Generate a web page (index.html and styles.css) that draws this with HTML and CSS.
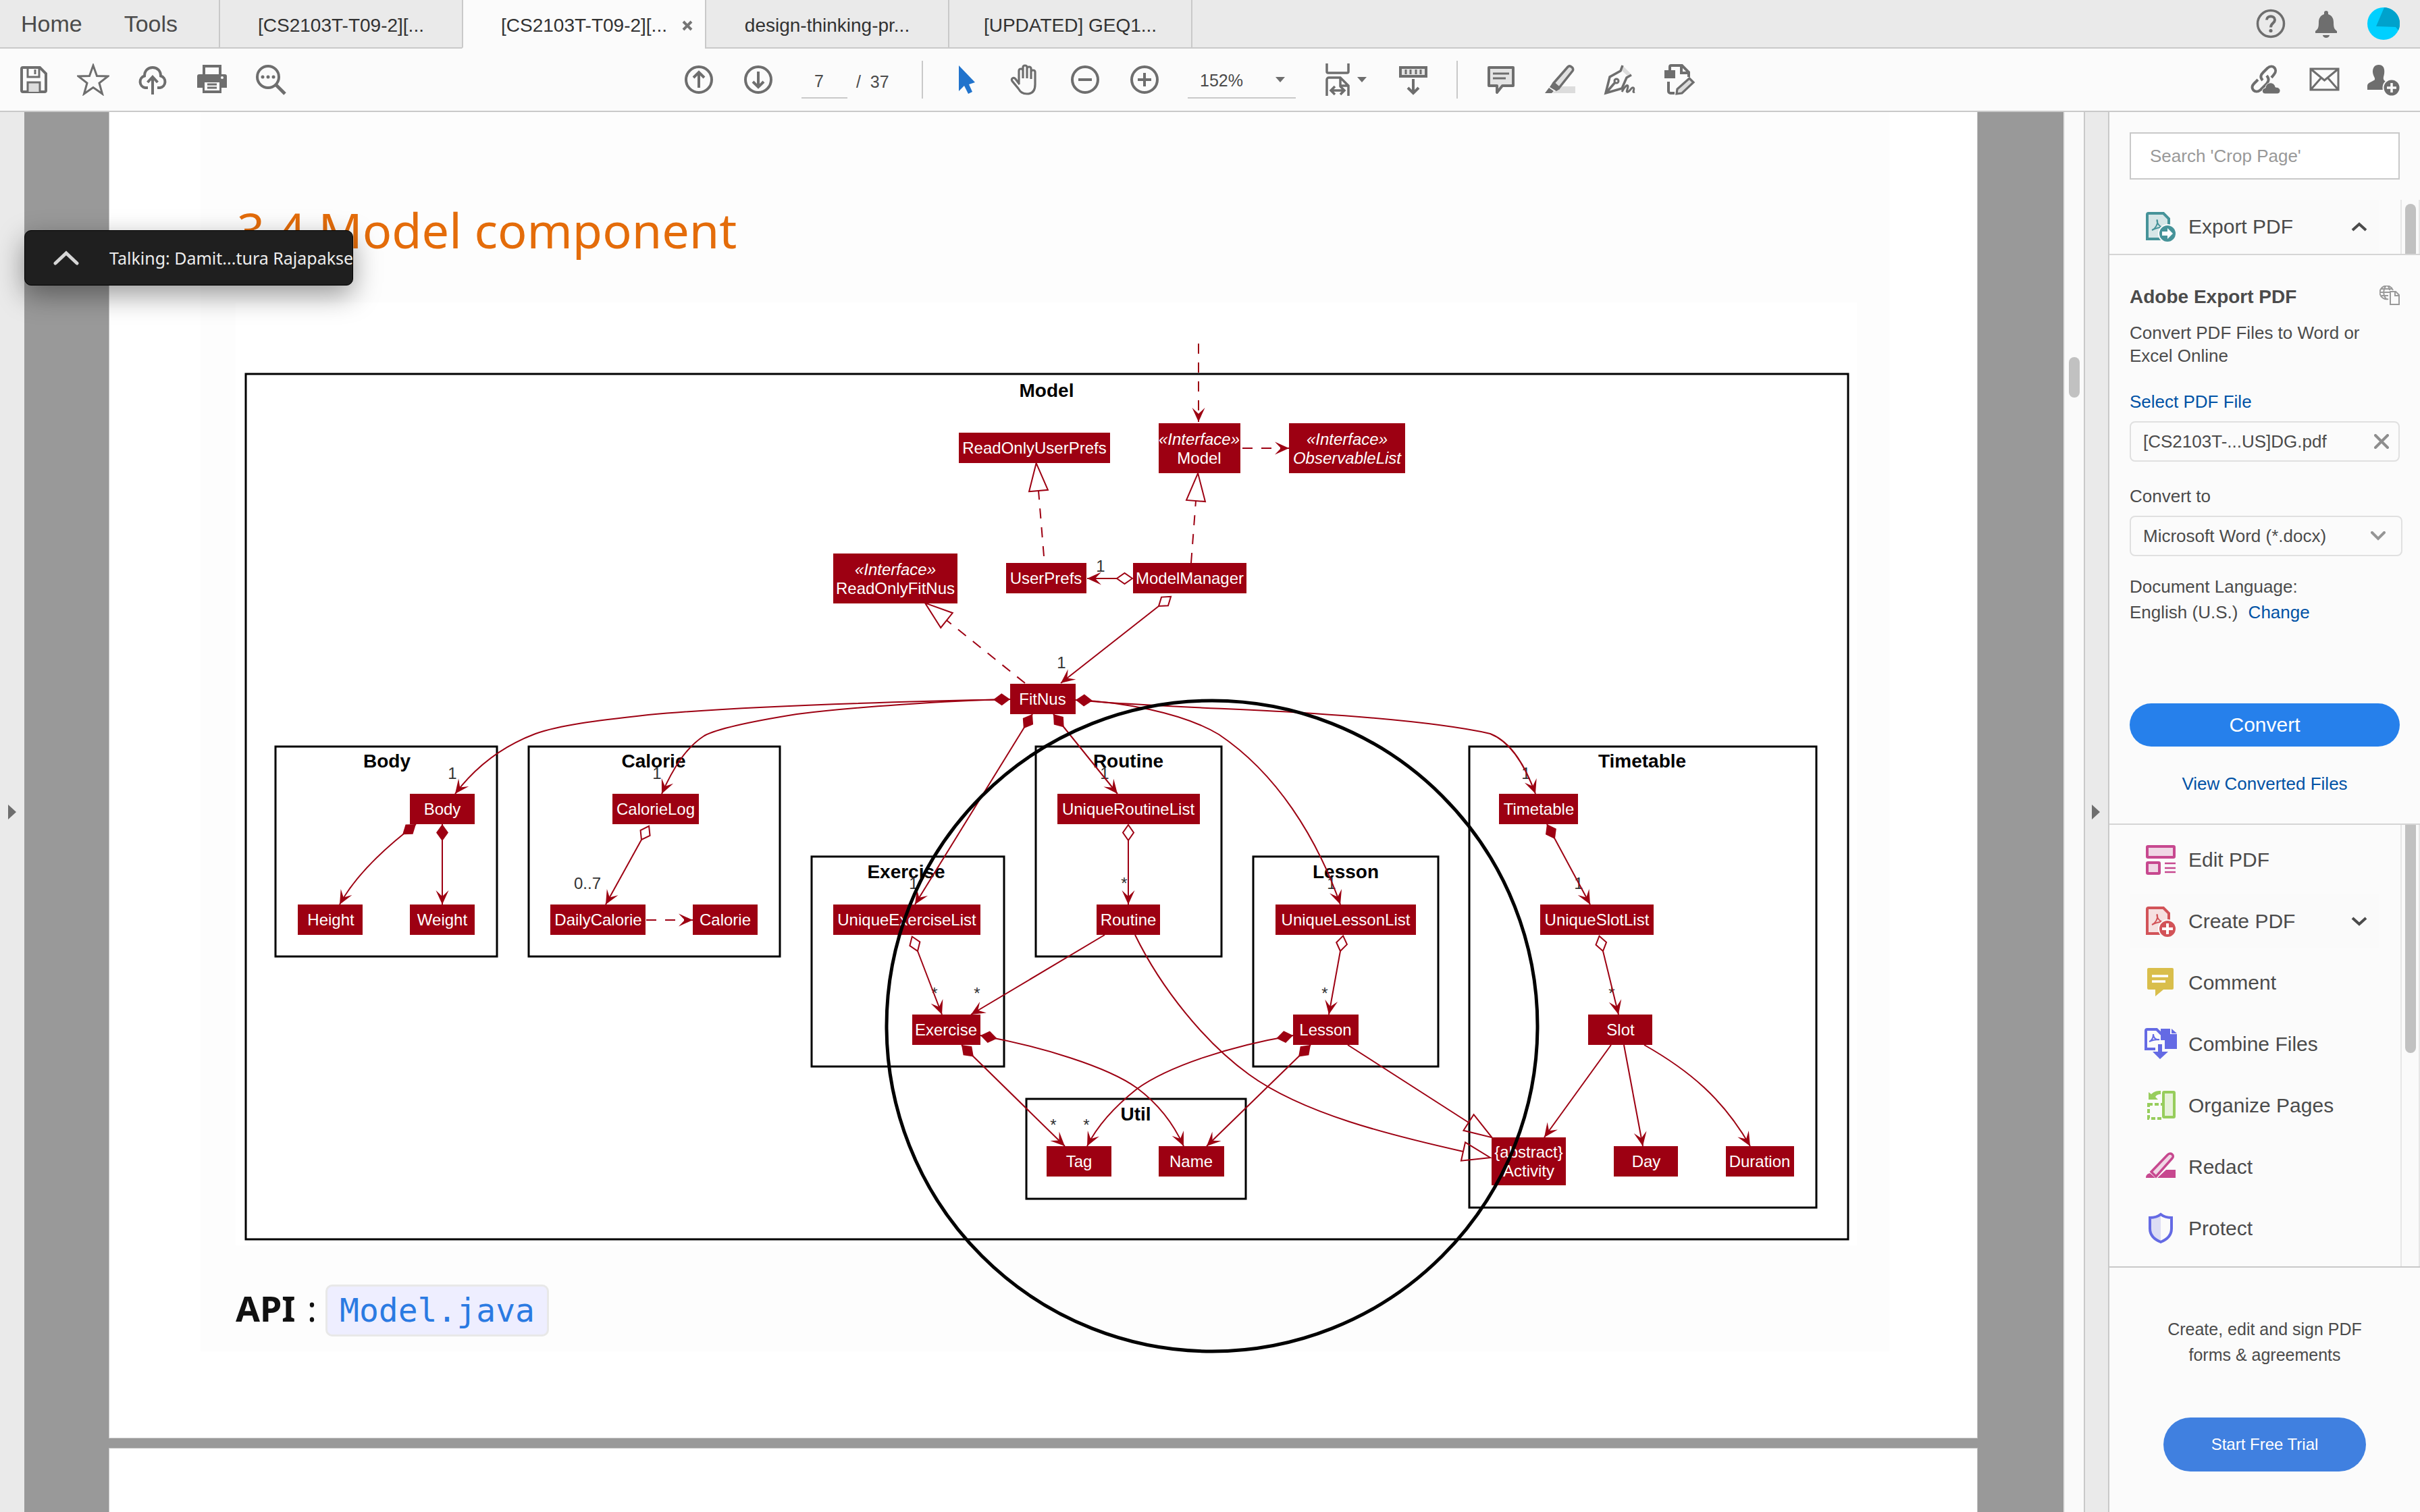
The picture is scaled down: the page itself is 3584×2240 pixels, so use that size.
FILE: index.html
```html
<!DOCTYPE html>
<html lang="en">
<head>
<meta charset="utf-8">
<title>[CS2103T-T09-2] DG.pdf</title>
<link rel="stylesheet" href="styles.css">
</head>
<body>
<header class="tabbar">
  <nav class="home-nav"><a href="#home">Home</a><a href="#tools">Tools</a></nav>
  <a class="tab" href="#doc1"><span>[CS2103T-T09-2][...</span></a>
  <div class="tab tab-active"><span>[CS2103T-T09-2][...</span>
    <button class="tab-close" aria-label="Close tab"><svg viewBox="0 0 16 16" width="16" height="16"><path d="M2 2l12 12M14 2L2 14" stroke="#757575" stroke-width="4" fill="none"/></svg></button>
  </div>
  <a class="tab" href="#doc3"><span>design-thinking-pr...</span></a>
  <a class="tab" href="#doc4"><span>[UPDATED] GEQ1...</span></a>
  <div class="account">
    <button class="account-btn" aria-label="Help"><svg class="icon" viewBox="0 0 48 48"><circle cx="24" cy="24" r="19.500" fill="none" stroke="#6e6e6e" stroke-width="3.500"/><path d="M18 18.500c0-7 12-7 12 0 0 5-6 4.500-6 11" fill="none" stroke="#6e6e6e" stroke-width="4"/><circle cx="24" cy="34.500" r="2.600" fill="#6e6e6e"/></svg></button>
    <button class="account-btn" aria-label="Notifications"><svg class="icon" viewBox="0 0 48 48"><path d="M24 5a3 3 0 0 1 3 3v2c6 2 8 7 8 12 0 8 1 10 5 13v3H8v-3c4-3 5-5 5-13 0-5 2-10 8-12V8a3 3 0 0 1 3-3zM19 41h10a5 4 0 0 1-10 0z" fill="#6e6e6e"/></svg></button>
    <button class="account-btn" aria-label="Account"><svg class="icon" viewBox="0 0 48 48"><circle cx="24" cy="24" r="24" fill="#00d0ff"/><path d="M25 0a24 24 0 0 1 21 34l-4-5-29-1z" fill="#00a2cc"/></svg></button>
  </div>
</header>

<div class="toolbar">
  <div class="group">
    <button class="tool" aria-label="Save"><svg class="icon line" viewBox="0 0 48 48"><path d="M8 6h25l9 9v25a2 2 0 0 1-2 2H8a2 2 0 0 1-2-2V8a2 2 0 0 1 2-2z"/><path d="M15 6v14h17V6M26 9v7" stroke-width="3"/><path d="M15 42V28h18v14" fill="#dcdcdc" stroke-width="3"/></svg></button>
    <button class="tool" aria-label="Star"><svg class="icon line" viewBox="0 0 48 48"><path d="M24 3l5.500 15.500L46 19 33 29l4.500 16L24 35.500 10.500 45 15 29 2 19l16.500-.5z" stroke-width="3"/></svg></button>
    <button class="tool" aria-label="Upload to cloud"><svg class="icon line" viewBox="0 0 48 48"><path d="M17 36h-4a9 9 0 0 1-1-17.500C12 11 17 6 24 6s12 5 12 12.500A9 9 0 0 1 35 36h-4"/><path d="M24 46V21M16.500 28l7.500-8 7.500 8"/></svg></button>
    <button class="tool" aria-label="Print"><svg class="icon" viewBox="0 0 48 48"><path d="M12 20V4h24v16" fill="none" stroke="#6e6e6e" stroke-width="4"/><path d="M5 16h38a3 3 0 0 1 3 3v17h-8v8H10v-8H2V19a3 3 0 0 1 3-3z" fill="#6e6e6e"/><path d="M13 28h22v12H13z" fill="#fbfbfb"/><path d="M17 31h14M17 36h14" stroke="#6e6e6e" stroke-width="3"/><circle cx="39" cy="21" r="2" fill="#fbfbfb"/></svg></button>
    <button class="tool" aria-label="Search"><svg class="icon line" viewBox="0 0 48 48"><circle cx="19" cy="20" r="16"/><path d="M31 32l13 13" stroke-width="5"/><circle class="dot" cx="11" cy="20" r="2.500"/><circle class="dot" cx="19" cy="20" r="2.500"/><circle class="dot" cx="27" cy="20" r="2.500"/></svg></button>
  </div>
  <div class="group group-center">
    <button class="tool" aria-label="Previous page"><svg class="icon line" viewBox="0 0 48 48"><circle cx="24" cy="24" r="19"/><path d="M24 36V13M16 21l8-8 8 8"/></svg></button>
    <button class="tool" aria-label="Next page"><svg class="icon line" viewBox="0 0 48 48"><circle cx="24" cy="24" r="19"/><path d="M24 12v23M16 27l8 8 8-8"/></svg></button>
    <input class="page-input" type="text" value="7" aria-label="Page number">
    <span class="page-total">/&nbsp; 37</span>
    <span class="divider"></span>
    <button class="tool" aria-label="Select"><svg class="icon" viewBox="0 0 48 48"><path d="M13 3v38l8-8 6 12 6-3-5-11 9-3z" fill="#2173cc"/></svg></button>
    <button class="tool" aria-label="Hand"><svg class="icon line" viewBox="0 0 48 48"><path d="M14 30V11c0-4 6-4 6 0v11V6c0-4 6-4 6 0v16V8c0-4 6-4 6 0v15V13c0-4 6-4 6 0v18c0 9-4 14-12 14-7 0-10-3-13-8L4 26c-2-4 2-6 5-3l6 8" stroke-width="3.200"/></svg></button>
    <button class="tool" aria-label="Zoom out"><svg class="icon line" viewBox="0 0 48 48"><circle cx="24" cy="24" r="19"/><path d="M14 24h20" stroke-width="4"/></svg></button>
    <button class="tool" aria-label="Zoom in"><svg class="icon line" viewBox="0 0 48 48"><circle cx="24" cy="24" r="19"/><path d="M14 24h20M24 14v20" stroke-width="4"/></svg></button>
    <span class="zoom"><select class="zoom-select" aria-label="Zoom level"><option>152%</option></select><svg class="zoom-caret" viewBox="0 0 14 8" width="14" height="8"><path d="M0 0h14L7 8z" fill="#6e6e6e"/></svg></span>
    <button class="tool tool-fit" aria-label="Fit width"><svg class="icon line" viewBox="0 0 48 48"><path d="M8 0v12a2 2 0 0 0 2 2h28a2 2 0 0 0 2-2V0M8 48V24a3 3 0 0 1 3-3h17l12 12v15M28 21v12h12M14 40h20M20 34l-6 6 6 6M28 34l6 6-6 6" stroke-width="3.500"/></svg><svg viewBox="0 0 14 8" width="14" height="8"><path d="M0 0h14L7 8z" fill="#6e6e6e"/></svg></button>
    <button class="tool" aria-label="Scrolling mode"><svg class="icon line" viewBox="0 0 48 48"><path d="M5 6h38v13H5z" fill="#e4e4e4"/><path d="M13 9v7M20 9v7M28 9v7M35 9v7" stroke-width="3"/><path d="M24 23v21M16 36l8 8 8-8"/></svg></button>
    <span class="divider divider-end"></span>
    <button class="tool" aria-label="Comment"><svg class="icon line" viewBox="0 0 48 48"><path d="M6 6h36v27H26l-8 10V33H6z" fill="#e4e4e4" stroke-linejoin="round"/><path d="M12 15h24M12 22h19" stroke-width="3"/></svg></button>
    <button class="tool" aria-label="Highlight"><svg class="icon" viewBox="0 0 48 48"><path d="M46 34v10H12l12-10z" fill="#dcdcdc"/><path d="M14 29L35 5c3-3 10 2 7 6L22 36z" fill="#e0e0e0" stroke="#6e6e6e" stroke-width="3.500"/><path d="M12 29l11 9-5 3-10-6zM7 36l7 5-3 3H1z" fill="#6e6e6e"/></svg></button>
    <button class="tool" aria-label="Sign"><svg class="icon line" viewBox="0 0 48 48"><path d="M27 2l13 13-5 3-11-10z" fill="#dcdcdc" stroke="none"/><path d="M28 3l-3 8L9 20 3 44l24-7 7-16 7-4M4 43l13-15" stroke-width="3.500"/><circle cx="19" cy="26" r="3" stroke-width="3"/><path d="M27 42c4-8 9-12 9-8s-4 9 0 8 5-8 8-6-3 8 2 6" stroke-width="3"/></svg></button>
    <button class="tool" aria-label="Edit document"><svg class="icon line" viewBox="0 0 48 48"><path d="M10 10V5a2 2 0 0 1 2-2h16l10 10v7M27 3v11h11M8 27v14a3 3 0 0 0 3 3h6" stroke-width="4"/><path d="M2 10h16v12H2z" fill="#6e6e6e" stroke="none"/><path d="M21 38l18-16 6 6-17 16-8 1z" fill="#dcdcdc" stroke-width="3.200"/></svg></button>
  </div>
  <div class="group group-end">
    <button class="tool" aria-label="Share link"><svg class="icon line" viewBox="0 0 48 48"><path d="M21 25c-5-5-2-9 1-12l6-6c8-7 16 2 10 9l-4 5M27 18c4 5 3 8 0 12l-9 9c-8 7-17-2-10-9l6-6" stroke-width="4"/><path d="M24 45c-5-1-5-8 1-9 1-9 13-10 15-1 9 0 9 10 2 10z" fill="#6e6e6e" stroke="#fbfbfb" stroke-width="1"/></svg></button>
    <button class="tool" aria-label="Mail"><svg class="icon line" viewBox="0 0 48 48"><path d="M4 8h41v31H4zM4 8l20.500 17L45 8M4 39l15-17M45 39L30 22" stroke-width="3"/></svg></button>
    <button class="tool" aria-label="Invite"><svg class="icon" viewBox="0 0 48 48"><path d="M17 2c10 0 9 12 7 18-1 5 2 6 6 8v11H0v-6c0-5 10-7 11-9 1-3-3-6-3-12 0-6 3-10 9-10z" fill="#6e6e6e"/><circle cx="36" cy="36" r="12.500" fill="#6e6e6e" stroke="#fbfbfb" stroke-width="2"/><path d="M29 36h14M36 29v14" stroke="#fbfbfb" stroke-width="3.500"/></svg></button>
  </div>
</div>

<main class="workspace">
  <button class="rail rail-left" aria-label="Show navigation pane"><svg viewBox="0 0 12 22" width="12" height="22"><path d="M0 0l12 11L0 22z" fill="#6e6e6e"/></svg></button>

  <div class="document">
    <article class="sheet">
      <div class="sheet-body">
        <h1>3.4 Model component</h1>
        <svg class="diagram" viewBox="349 448 2401 1397" role="img" aria-label="Model component class diagram">
          <defs>
            <marker id="arrow" viewBox="-24 -12 26 24" markerUnits="userSpaceOnUse" markerWidth="26" markerHeight="24" refX="0" refY="0" orient="auto"><path d="M0 0L-21 -9.500L-12 0L-21 9.500z" fill="#9d0012"/></marker>
            <marker id="filled" viewBox="-2 -12 30 24" markerUnits="userSpaceOnUse" markerWidth="30" markerHeight="24" refX="0" refY="0" orient="auto"><path d="M0 0L12.500 -9L25 0L12.500 9z" fill="#9d0012"/></marker>
            <marker id="open" viewBox="-2 -12 30 24" markerUnits="userSpaceOnUse" markerWidth="30" markerHeight="24" refX="24" refY="0" orient="auto"><path d="M1 0L12.500 -8L24 0L12.500 8z" fill="none" stroke="#9d0012" stroke-width="2"/></marker>
            <marker id="tri" viewBox="-2 -16 48 32" markerUnits="userSpaceOnUse" markerWidth="48" markerHeight="32" refX="0" refY="0" orient="auto"><path d="M0 -14L41 0L0 14z" fill="none" stroke="#9d0012" stroke-width="2"/></marker>
          </defs>
          <g class="packages">
            <rect x="364" y="554" width="2373" height="1282"/>
            <rect x="408" y="1106" width="328" height="311"/>
            <rect x="783" y="1106" width="372" height="311"/>
            <rect x="1202" y="1269" width="285" height="311"/>
            <rect x="1534" y="1106" width="275" height="311"/>
            <rect x="1856" y="1269" width="274" height="311"/>
            <rect x="1520" y="1628" width="325" height="148"/>
            <rect x="2176" y="1106" width="514" height="683"/>
          </g>
          <g class="titles">
            <text x="1550" y="588">Model</text>
            <text x="573" y="1137">Body</text>
            <text x="968" y="1137">Calorie</text>
            <text x="1342" y="1301">Exercise</text>
            <text x="1671" y="1137">Routine</text>
            <text x="1993" y="1301">Lesson</text>
            <text x="1682" y="1660">Util</text>
            <text x="2432" y="1137">Timetable</text>
          </g>
          <g class="counts">
            <text x="1630" y="847">1</text><text x="1572" y="990">1</text>
            <text x="670" y="1154">1</text><text x="973" y="1154">1</text><text x="870" y="1317">0..7</text>
            <text x="1636" y="1154">1</text><text x="1353" y="1317">1</text><text x="1972" y="1317">1</text>
            <text x="2260" y="1154">1</text><text x="2338" y="1317">1</text>
            <text x="1665" y="1317">*</text><text x="1384" y="1480">*</text><text x="1447" y="1480">*</text>
            <text x="1962" y="1480">*</text><text x="1560" y="1675">*</text><text x="1609" y="1675">*</text><text x="2387" y="1480">*</text>
          </g>
          <g class="nodes">
            <rect x="1420" y="641" width="224" height="45"/><text x="1532" y="672">ReadOnlyUserPrefs</text>
            <rect x="1716" y="627" width="121" height="74"/><text class="it" x="1776" y="659">«Interface»</text><text x="1776" y="687">Model</text>
            <rect x="1909" y="627" width="172" height="74"/><text class="it" x="1995" y="659">«Interface»</text><text class="it" x="1995" y="687">ObservableList</text>
            <rect x="1234" y="820" width="184" height="74"/><text class="it" x="1326" y="852">«Interface»</text><text x="1326" y="880">ReadOnlyFitNus</text>
            <rect x="1490" y="834" width="119" height="45"/><text x="1549" y="865">UserPrefs</text>
            <rect x="1678" y="834" width="168" height="45"/><text x="1762" y="865">ModelManager</text>
            <rect x="1496" y="1013" width="97" height="45"/><text x="1544" y="1044">FitNus</text>
            <rect x="607" y="1176" width="96" height="45"/><text x="655" y="1207">Body</text>
            <rect x="907" y="1176" width="128" height="45"/><text x="971" y="1207">CalorieLog</text>
            <rect x="441" y="1340" width="96" height="45"/><text x="490" y="1371">Height</text>
            <rect x="607" y="1340" width="96" height="45"/><text x="655" y="1371">Weight</text>
            <rect x="815" y="1340" width="141" height="45"/><text x="886" y="1371">DailyCalorie</text>
            <rect x="1026" y="1340" width="96" height="45"/><text x="1074" y="1371">Calorie</text>
            <rect x="1566" y="1176" width="211" height="45"/><text x="1671" y="1207">UniqueRoutineList</text>
            <rect x="1234" y="1340" width="218" height="45"/><text x="1343" y="1371">UniqueExerciseList</text>
            <rect x="1624" y="1340" width="94" height="45"/><text x="1671" y="1371">Routine</text>
            <rect x="1889" y="1340" width="208" height="45"/><text x="1993" y="1371">UniqueLessonList</text>
            <rect x="1351" y="1503" width="101" height="45"/><text x="1401" y="1534">Exercise</text>
            <rect x="1915" y="1503" width="97" height="45"/><text x="1963" y="1534">Lesson</text>
            <rect x="1550" y="1698" width="96" height="45"/><text x="1598" y="1729">Tag</text>
            <rect x="1716" y="1698" width="97" height="45"/><text x="1764" y="1729">Name</text>
            <rect x="2220" y="1176" width="117" height="45"/><text x="2279" y="1207">Timetable</text>
            <rect x="2281" y="1340" width="168" height="45"/><text x="2365" y="1371">UniqueSlotList</text>
            <rect x="2352" y="1503" width="95" height="45"/><text x="2400" y="1534">Slot</text>
            <rect x="2209" y="1685" width="110" height="71"/><text x="2264" y="1715">{abstract}</text><text x="2264" y="1743">Activity</text>
            <rect x="2390" y="1698" width="95" height="45"/><text x="2438" y="1729">Day</text>
            <rect x="2556" y="1698" width="101" height="45"/><text x="2606" y="1729">Duration</text>
          </g>
          <g class="edges">
            <path class="dash" d="M1775 509V625" marker-end="url(#arrow)"/>
            <path class="dash" d="M1840 664H1909" marker-end="url(#arrow)"/>
            <path class="dash" d="M957 1363H1026" marker-end="url(#arrow)"/>
            <path class="dash" d="M1546 824L1538 727" marker-end="url(#tri)"/>
            <path class="dash" d="M1764 834L1771 742" marker-end="url(#tri)"/>
            <path class="dash" d="M1518 1012L1402 919" marker-end="url(#tri)"/>
            <path d="M1654 857H1610" marker-start="url(#open)" marker-end="url(#arrow)"/>
            <path d="M1716 898L1571 1012" marker-start="url(#open)" marker-end="url(#arrow)"/>
            <path d="M1496 1036C1300 1040 1100 1046 960 1059C880 1068 830 1074 793 1087C745 1105 705 1135 674 1176" marker-start="url(#filled)" marker-end="url(#arrow)"/>
            <path d="M1496 1036C1400 1038 1260 1048 1180 1058C1130 1066 1065 1078 1043 1090C1015 1108 996 1140 980 1176" marker-end="url(#arrow)"/>
            <path d="M616 1221C570 1256 527 1296 503 1340" marker-start="url(#filled)" marker-end="url(#arrow)"/>
            <path d="M655 1221V1340" marker-start="url(#filled)" marker-end="url(#arrow)"/>
            <path d="M950 1244L897 1340" marker-start="url(#open)" marker-end="url(#arrow)"/>
            <path d="M1529 1058L1355 1340" marker-start="url(#filled)" marker-end="url(#arrow)"/>
            <path d="M1560 1058L1655 1176" marker-start="url(#filled)" marker-end="url(#arrow)"/>
            <path d="M1593 1037C1660 1040 1750 1055 1805 1088C1890 1145 1950 1240 1985 1340" marker-start="url(#filled)" marker-end="url(#arrow)"/>
            <path d="M1593 1037C1700 1047 1840 1050 1945 1057C2050 1064 2150 1074 2207 1087C2240 1100 2260 1138 2274 1176" marker-end="url(#arrow)"/>
            <path d="M1671 1245V1340" marker-start="url(#open)" marker-end="url(#arrow)"/>
            <path d="M1359 1409L1395 1503" marker-start="url(#open)" marker-end="url(#arrow)"/>
            <path d="M1636 1385L1438 1503" marker-end="url(#arrow)"/>
            <path d="M1681 1385C1720 1465 1785 1545 1850 1592C1930 1650 2060 1682 2167 1706" marker-end="url(#tri)"/>
            <path d="M1985 1409L1968 1503" marker-start="url(#open)" marker-end="url(#arrow)"/>
            <path d="M1424 1548L1577 1698" marker-start="url(#filled)" marker-end="url(#arrow)"/>
            <path d="M1452 1534C1540 1550 1640 1580 1684 1612C1715 1635 1738 1665 1753 1698" marker-start="url(#filled)" marker-end="url(#arrow)"/>
            <path d="M1915 1534C1820 1550 1730 1580 1684 1613C1650 1640 1625 1668 1610 1698" marker-start="url(#filled)" marker-end="url(#arrow)"/>
            <path d="M1941 1548L1787 1698" marker-start="url(#filled)" marker-end="url(#arrow)"/>
            <path d="M1996 1548L2175 1663" marker-end="url(#tri)"/>
            <path d="M2291 1221L2355 1340" marker-start="url(#filled)" marker-end="url(#arrow)"/>
            <path d="M2374 1409L2397 1503" marker-start="url(#open)" marker-end="url(#arrow)"/>
            <path d="M2386 1548L2287 1685" marker-end="url(#arrow)"/>
            <path d="M2405 1548L2433 1698" marker-end="url(#arrow)"/>
            <path d="M2435 1548C2502 1586 2552 1628 2592 1698" marker-end="url(#arrow)"/>
          </g>
          <circle cx="1795" cy="1520" r="482" fill="none" stroke="#000" stroke-width="5"/>
        </svg>
        <p class="api"><strong>API</strong><span>:</span><code>Model.java</code></p>
      </div>
    </article>
    <article class="sheet sheet-next"></article>
  </div>

  <div class="doc-scroll"><span class="thumb doc-thumb"></span></div>
  <button class="rail rail-right" aria-label="Hide tools pane"><svg viewBox="0 0 12 22" width="12" height="22"><path d="M0 0l12 11L0 22z" fill="#6e6e6e"/></svg></button>

  <aside class="panel">
    <div class="search"><input type="search" placeholder="Search 'Crop Page'" aria-label="Search tools"></div>
    <div class="scroll-row export-head">
      <button class="tool-row tool-row-open">
        <svg class="icon" viewBox="0 0 48 48"><path d="M6 4h22l8 8v30H4V6a2 2 0 0 1 2-2z" fill="#d6e6e7" stroke="#469399" stroke-width="4"/><path d="M11 29c5-2 9-9 8-14s-2 9 10 10c-8-1-14 2-18 4z" fill="none" stroke="#469399" stroke-width="2"/><circle cx="34" cy="34" r="13" fill="#469399" stroke="#fafafa" stroke-width="2"/><path d="M26 31h8v-5l8 8-8 8v-5h-8z" fill="#fff"/></svg>
        <span>Export PDF</span>
        <svg class="chevron" viewBox="0 0 24 14" width="24" height="14"><path d="M2 12l10-9 10 9" fill="none" stroke="#4b4b4b" stroke-width="4"/></svg>
      </button>
      <div class="panel-scroll"><span class="thumb export-thumb"></span></div>
    </div>
    <section class="export-form">
      <div class="form-title"><h2>Adobe Export PDF</h2><svg viewBox="0 0 30 30" width="30" height="30" fill="none" stroke="#9a9a9a" stroke-width="2"><path d="M13 20a10 10 0 1 1 7-13M1 10h14M3 5h15M3 15h10M10 0c-5 6-5 14 0 20M11 0c3 2 4 4 4 7"/><path d="M16 9h8l5 5v14H16zM23 9v6h6"/></svg></div>
      <p class="intro">Convert PDF Files to Word or Excel Online</p>
      <a class="link select-link" href="#select">Select PDF File</a>
      <div class="file"><span>[CS2103T-...US]DG.pdf</span><button aria-label="Remove file"><svg viewBox="0 0 22 22" width="22" height="22"><path d="M2 2l18 18M20 2L2 20" stroke="#8e8e8e" stroke-width="4" fill="none" stroke-linecap="round"/></svg></button></div>
      <label class="convert-label" for="format">Convert to</label>
      <div class="format"><select id="format"><option>Microsoft Word (*.docx)</option></select><svg viewBox="0 0 22 14" width="22" height="14"><path d="M2 2l9 9 9-9" fill="none" stroke="#959595" stroke-width="4" stroke-linecap="round"/></svg></div>
      <p class="language">Document Language:<br>English (U.S.) <a class="link" href="#language">Change</a></p>
      <button class="convert">Convert</button>
      <a class="link view-link" href="#converted">View Converted Files</a>
    </section>
    <div class="scroll-row tools">
      <div class="tool-list">
        <button class="tool-row"><svg class="icon" viewBox="0 0 48 48"><g fill="#f0d7e5" stroke="#c7488f" stroke-width="4"><rect x="4" y="4" width="40" height="16" rx="1"/><rect x="4" y="28" width="18" height="16" rx="1"/></g><path d="M30 29h16M30 36h16M30 42h16" stroke="#c7488f" stroke-width="2.500"/></svg><span>Edit PDF</span></button>
        <button class="tool-row tool-row-open"><svg class="icon" viewBox="0 0 48 48"><path d="M6 4h22l8 8v30H4V6a2 2 0 0 1 2-2z" fill="#f6e0e0" stroke="#d25358" stroke-width="4"/><path d="M11 29c5-2 9-9 8-14s-2 9 10 10c-8-1-14 2-18 4z" fill="none" stroke="#d25358" stroke-width="2"/><circle cx="34" cy="35" r="13" fill="#d25358" stroke="#fafafa" stroke-width="2"/><path d="M26 35h16M34 27v16" stroke="#fff" stroke-width="4"/></svg><span>Create PDF</span><svg class="chevron" viewBox="0 0 24 14" width="24" height="14"><path d="M2 2l10 9 10-9" fill="none" stroke="#4b4b4b" stroke-width="4"/></svg></button>
        <button class="tool-row"><svg class="icon" viewBox="0 0 48 48"><path d="M6 2h35a2 2 0 0 1 2 2v28a2 2 0 0 1-2 2H28L16 44V34H6a2 2 0 0 1-2-2V4a2 2 0 0 1 2-2z" fill="#d9be4b"/><path d="M11 14h24M11 22h20" stroke="#fff" stroke-width="3.500"/></svg><span>Comment</span></button>
        <button class="tool-row"><svg class="icon" viewBox="0 0 48 48"><path d="M16 31H2V4a2 2 0 0 1 2-2h14l7 7" fill="none" stroke="#646ae4" stroke-width="4"/><path d="M7 20c5-2 6-6 6-11 0 6 4 9 9 8-6 0-11 1-15 3z" fill="none" stroke="#646ae4" stroke-width="2"/><path d="M24 1h14v8h10v22H30V18h-6zM40 1l8 7h-8zM20 24h6v11h9L23 46 12 35h8z" fill="#646ae4"/></svg><span>Combine Files</span></button>
        <button class="tool-row"><svg class="icon" viewBox="0 0 48 48"><rect x="28" y="4" width="16" height="37" rx="1" fill="#e7f2da" stroke="#97cd5c" stroke-width="4"/><path d="M6 20v23h20M6 22h20" fill="none" stroke="#97cd5c" stroke-width="4" stroke-dasharray="6 3"/><path d="M6 4l4 3c4-4 8-5 14-5v5c-4 0-6 1-8 4l4 4H6z" fill="#97cd5c"/></svg><span>Organize Pages</span></button>
        <button class="tool-row"><svg class="icon" viewBox="0 0 48 48"><path d="M10 31L34 6c5-5 11 1 7 5L17 38z" fill="#f0d7e5" stroke="#c7488f" stroke-width="3.500"/><path d="M8 33l8 7H2c0-4 2-6 6-7zM32 28h14v12H19z" fill="#c7488f"/></svg><span>Redact</span></button>
        <button class="tool-row"><svg class="icon" viewBox="0 0 48 48"><path d="M24 4v40C12 38 8 32 8 24V9c7 0 11-2 16-5z" fill="#dcdcf4"/><path d="M24 3c5 4 10 5 16 5v16c0 10-6 16-16 20C14 40 8 34 8 24V8c6 0 11-1 16-5z" fill="none" stroke="#646ae4" stroke-width="4"/></svg><span>Protect</span></button>
      </div>
      <div class="panel-scroll"><span class="thumb tools-thumb"></span></div>
    </div>
    <footer class="promo"><p>Create, edit and sign PDF<br>forms &amp; agreements</p><button>Start Free Trial</button></footer>
  </aside>
</main>

<div class="talking"><svg viewBox="0 0 38 22" width="38" height="22"><path d="M3 19L19 4l16 15" fill="none" stroke="#d6d6d6" stroke-width="5" stroke-linecap="round"/></svg><span>Talking: Damit...tura Rajapakse</span></div>
</body>
</html>
```
FILE: styles.css
```css
* { box-sizing: border-box; }

body {
  margin: 0;
  height: 100vh;
  overflow: hidden;
  display: flex;
  flex-direction: column;
  font-family: "Liberation Sans", Arial, sans-serif;
  font-size: 26px;
  color: #4b4b4b;
  background: #fbfbfb;
}

button, input, select { font: inherit; color: inherit; }
button { margin: 0; padding: 0; border: 0; background: none; }
a { color: inherit; text-decoration: none; }
svg { display: block; flex: none; }
h1, h2, p { margin: 0; }

.icon { width: 48px; height: 48px; }
.line { fill: none; stroke: #6e6e6e; stroke-width: 4px; }
.line path[stroke-width="3"] { stroke-width: 3px; }
.line .dot { fill: #6e6e6e; stroke: none; }

/* Tab strip */
.tabbar { display: flex; height: 72px; background: #eaeaea; }
.home-nav {
  display: flex;
  gap: 62px;
  width: 324px;
  padding-left: 31px;
  align-items: center;
  font-size: 34px;
  border-bottom: 2px solid #c9c9c9;
}
.tab {
  display: grid;
  grid-template-columns: 1fr auto 1fr;
  align-items: center;
  width: 360px;
  padding-top: 6px;
  font-size: 28px;
  color: #323232;
  border-left: 2px solid #c9c9c9;
  border-bottom: 2px solid #c9c9c9;
}
.tab span { grid-column: 2; }
.tab-active { background: #fbfbfb; border-bottom-color: #fbfbfb; }
.tab-close { justify-self: end; margin-right: 18px; }
.account {
  flex: 1;
  display: flex;
  justify-content: flex-end;
  align-items: center;
  padding-right: 10px;
  border-left: 2px solid #c9c9c9;
  border-bottom: 2px solid #c9c9c9;
}
.account-btn { width: 82px; display: grid; place-items: center; }
.account-btn:last-child { width: 88px; }

/* Toolbar */
.toolbar {
  display: grid;
  grid-template-columns: 1fr auto 1fr;
  height: 94px;
  border-bottom: 2px solid #c9c9c9;
}
.group { display: flex; align-items: center; padding-left: 6px; }
.group-center { padding: 0 62px 0 0; }
.group-end { justify-content: flex-end; padding-right: 10px; }
.tool { width: 88px; height: 88px; display: grid; place-items: center; }
.page-input {
  width: 68px;
  height: 56px;
  margin-left: 20px;
  padding: 6px 16px 0 0;
  text-align: center;
  font-size: 25px;
  background: none;
  border: 0;
  border-bottom: 2px solid #c9c9c9;
}
.page-total { width: 110px; padding: 6px 0 0 13px; font-size: 25px; }
.divider { width: 2px; height: 56px; margin-right: 20px; background: #c9c9c9; }
.divider-end { margin-left: 20px; }
.zoom { display: grid; align-items: center; width: 160px; margin-left: 20px; }
.zoom-select {
  grid-area: 1 / 1;
  height: 56px;
  padding: 4px 0 0 18px;
  font-size: 25px;
  appearance: none;
  background: none;
  border: 0;
  border-bottom: 2px solid #c9c9c9;
}
.zoom-caret { grid-area: 1 / 1; justify-self: end; margin-right: 16px; pointer-events: none; }
.tool-fit { width: 92px; margin-left: 38px; display: flex; align-items: center; gap: 5px; }

/* Workspace */
.workspace { flex: 1; min-height: 0; display: flex; background: #999; }
.rail { background: #eaeaea; display: flex; align-items: center; flex: none; }
.rail-left { width: 36px; justify-content: center; }
.rail-right {
  width: 38px;
  padding-left: 10px;
  border-left: 2px solid #c9c9c9;
  border-right: 2px solid #c9c9c9;
}
.document {
  flex: 1;
  min-width: 0;
  display: flex;
  flex-direction: column;
  gap: 16px;
  padding: 0 128px 0 126px;
  overflow: hidden;
}
.sheet { flex: none; padding: 0 130px 128px 135px; background: #fff; outline: 1px solid #c4c4c4; }
.sheet-next { flex: 1; }
.sheet-body { padding: 124px 48px 22px 52px; background: #fdfdfd; }
.sheet-body h1 {
  margin-bottom: 58px;
  padding-left: 2px;
  font: 400 72px/100px "Noto Sans", sans-serif;
  color: #e46c0a;
}
.diagram { width: 100%; height: auto; overflow: visible; background: #fff; font-family: "Liberation Sans", Arial, sans-serif; }
.packages { fill: none; stroke: #000; stroke-width: 3px; }
.titles { font-size: 28px; font-weight: 700; text-anchor: middle; fill: #000; }
.counts { font-size: 24px; text-anchor: middle; fill: #333; }
.nodes { font-size: 24px; text-anchor: middle; }
.nodes rect { fill: #9d0012; }
.nodes text { fill: #fff; }
.nodes .it { font-style: italic; }
.edges { fill: none; stroke: #9d0012; stroke-width: 2px; }
.edges .dash { stroke-dasharray: 15 13; }
.api {
  display: flex;
  align-items: baseline;
  margin-top: 58px;
  font: 400 52px/70px "Noto Sans", sans-serif;
  color: #111;
}
.api strong { width: 106px; }
.api span { width: 27px; }
.api code {
  padding: 0 18px;
  font: 400 48px/71px "DejaVu Sans Mono", monospace;
  color: #2a7ae2;
  background: #eef;
  border: 3px solid #e8e8e8;
  border-radius: 10px;
}

/* Scroll bars */
.thumb { display: block; width: 16px; border-radius: 8px; background: #c1c1c1; }
.doc-scroll { flex: none; width: 30px; padding-left: 6px; background: #fafafa; border-left: 2px solid #e6e6e6; }
.doc-thumb { height: 60px; margin-top: 363px; }
.panel-scroll { flex: none; width: 29px; padding-left: 5px; background: #fafafa; border: solid #e6e6e6; border-width: 0 2px; }
.export-thumb { height: 74px; margin-top: 6px; border-radius: 8px 8px 0 0; }
.tools-thumb { height: 338px; border-radius: 0 0 8px 8px; }

/* Tools panel */
.panel { flex: none; width: 460px; display: flex; flex-direction: column; background: #fbfbfb; }
.search { padding: 30px; }
.search input {
  display: block;
  width: 100%;
  height: 70px;
  padding: 0 28px;
  background: #fff;
  border: 2px solid #c9c9c9;
  appearance: none;
}
.search input::placeholder { color: #999; opacity: 1; }
.scroll-row { display: flex; justify-content: space-between; padding-left: 30px; border-bottom: 2px solid #d5d5d5; }
.tool-row { display: flex; align-items: center; width: 370px; height: 80px; padding: 0 18px 0 22px; font-size: 30px; text-align: left; }
.tool-row span { flex: 1; padding-left: 17px; }
.tool-row-open { background: #fafafa; }
.export-form { display: flex; flex-direction: column; padding: 45px 30px 42px; line-height: 34px; border-bottom: 2px solid #d5d5d5; }
.form-title { display: flex; justify-content: space-between; }
.form-title h2 { font-size: 28px; line-height: 34px; }
.intro { margin-top: 19px; }
.link { color: #0052a5; }
.select-link { margin: 34px 0 12px; }
.file {
  display: flex;
  align-items: center;
  justify-content: space-between;
  height: 60px;
  padding: 0 14px 0 18px;
  border: 2px solid #e0e0e0;
  border-radius: 8px;
}
.convert-label { margin: 34px 0 12px; }
.format { display: grid; align-items: center; margin-right: -4px; }
.format select {
  grid-area: 1 / 1;
  height: 60px;
  padding: 0 18px;
  appearance: none;
  background: none;
  border: 2px solid #e0e0e0;
  border-radius: 8px;
}
.format svg { grid-area: 1 / 1; justify-self: end; margin-right: 25px; pointer-events: none; }
.language { margin-top: 26px; line-height: 38px; }
.language .link { margin-left: 8px; }
.convert { height: 64px; margin-top: 116px; border-radius: 32px; background: #2680eb; color: #fff; font-size: 30px; }
.view-link { margin-top: 38px; text-align: center; }
.tools { flex: 1; min-height: 0; overflow: hidden; border-bottom-color: #c9c9c9; }
.tool-list { display: flex; flex-direction: column; gap: 11px; padding-top: 12px; }
.promo { display: flex; flex-direction: column; align-items: center; padding: 72px 30px 60px; }
.promo p { font-size: 25px; line-height: 38px; text-align: center; }
.promo button { width: 300px; height: 80px; margin-top: 74px; border-radius: 40px; background: #4080e0; color: #fff; font-size: 24px; }

/* Call overlay, floats over the window */
.talking {
  position: absolute;
  left: 36px;
  top: 341px;
  width: 487px;
  height: 82px;
  display: flex;
  align-items: center;
  gap: 45px;
  padding-left: 42px;
  overflow: hidden;
  white-space: nowrap;
  font: 400 25px/34px "Noto Sans", sans-serif;
  color: #ededed;
  background: #1f1f1f;
  border: 1px solid #000;
  border-radius: 10px;
  box-shadow: 0 14px 40px rgba(0, 0, 0, .4);
}
```
